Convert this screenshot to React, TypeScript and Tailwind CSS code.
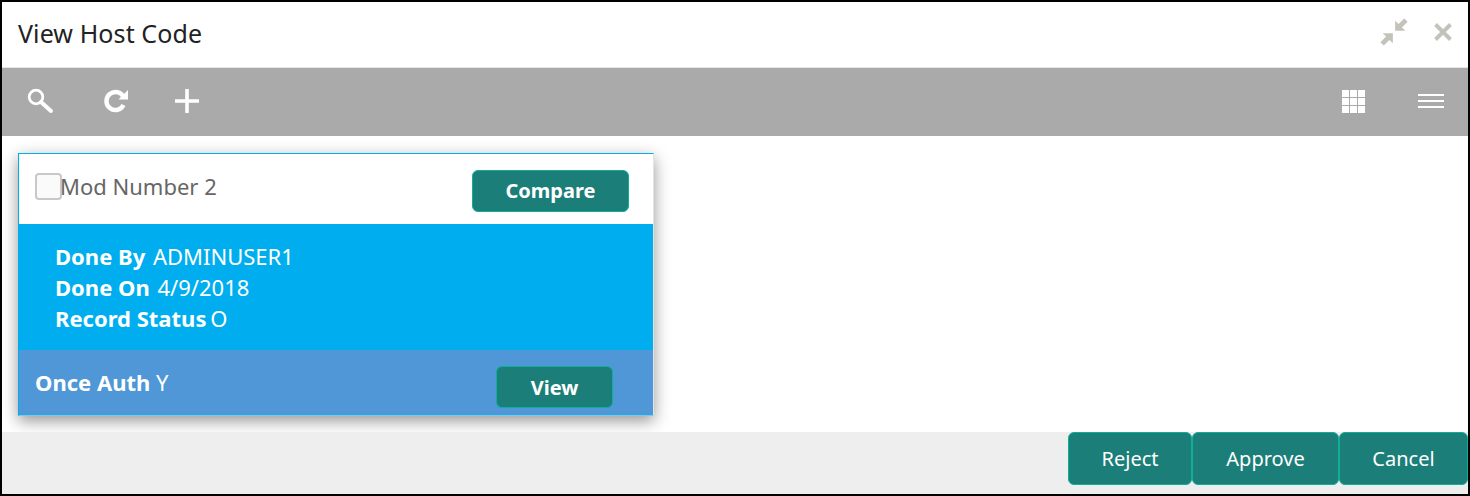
export default function App() {
  const font = { fontFamily: '"Noto Sans", "Open Sans", sans-serif' };
  return (
    <div style={font} className="w-[1470px] h-[496px] border-2 border-black bg-white flex flex-col overflow-hidden">
      <div className="h-[66px] shrink-0 flex items-center pl-[16px] pr-[16px] justify-between border-b border-[#e6e6e6]">
        <span className="text-[25px] text-[#222222] tracking-[0.1px] -mt-[1px]">View Host Code</span>
        <div className="flex items-center gap-[23px] mb-[5px]">
          <svg width="34" height="34" viewBox="0 0 30 30" fill="#c4c3bb">
            <path d="M16 14V5l3 3 5-5 3 3-5 5 3 3z" />
            <path d="M14 16v9l-3-3-5 5-3-3 5-5-3-3z" />
          </svg>
          <svg width="18" height="18" viewBox="0 0 18 18" stroke="#c4c3bb" strokeWidth="4" fill="none">
            <path d="M1.500 1.500l15 15M16.500 1.500l-15 15" />
          </svg>
        </div>
      </div>
      <div className="h-[68px] shrink-0 bg-[#aaaaaa] flex items-center justify-between pl-[24px] pr-[24px]">
        <div className="flex items-center -mt-[3px]">
          <svg width="28" height="28" viewBox="0 0 28 28" fill="none" stroke="#fff" className="mr-[49px]">
            <circle cx="10" cy="10" r="6.8" strokeWidth="2.8" />
            <path d="M15 15l10 9" strokeWidth="4" strokeLinecap="round" />
          </svg>
          <svg width="26" height="26" viewBox="0 0 26 26" className="mr-[45px]">
            <path d="M20.5 17a9 9 0 1 1 0-8" fill="none" stroke="#fff" strokeWidth="4.4" />
            <path d="M15.5 11.5H25V2z" fill="#fff" />
          </svg>
          <svg width="26" height="26" viewBox="0 0 26 26" stroke="#fff" strokeWidth="3.6">
            <path d="M13 1v24M1 13h24" />
          </svg>
        </div>
        <div className="flex items-center gap-[53px] -mt-[2px]">
          <svg width="23" height="23" viewBox="0 0 23 23" fill="#fff">
            <path d="M0 0h7v7H0zM8 0h7v7H8zM16 0h7v7h-7zM0 8h7v7H0zM8 8h7v7H8zM16 8h7v7h-7zM0 16h7v7H0zM8 16h7v7H8zM16 16h7v7h-7z" />
          </svg>
          <div className="flex flex-col gap-[4px] w-[26px]">
            <div className="h-[2px] bg-white" />
            <div className="h-[2px] bg-white" />
            <div className="h-[2px] bg-white" />
          </div>
        </div>
      </div>
      <div className="h-[296px] shrink-0 pl-[16px] pt-[17px] bg-white">
        <div className="w-[636px] h-[263px] border border-[#00aeef] border-b-[#5fd6f5] border-r-[#e4e4e4] shadow-[0_5px_15px_rgba(0,0,0,0.42)] flex flex-col">
          <div className="h-[70px] shrink-0 bg-white flex items-center justify-between pl-[16px] pr-[24px]">
            <div className="flex items-center h-[30px] -mt-[6px]">
              <span className="w-[27px] h-[27px] rounded-[4px] border-2 border-[#c8c8c8] bg-[#fafafa]" />
              <span className="text-[22px] text-[#666666] -ml-[2px] leading-[30px]">Mod Number 2</span>
            </div>
            <button className="w-[157px] h-[42px] rounded-[6px] bg-[#1c7e78] border border-[#0fae9b] text-white font-bold text-[20px] mt-[3px]">
              Compare
            </button>
          </div>
          <div className="h-[126px] shrink-0 bg-[#00aeef] pl-[36px] pt-[17px] text-white text-[22px] leading-[31px]">
            <div><b>Done By</b> <span className="ml-[2px]">ADMINUSER1</span></div>
            <div><b>Done On</b> <span className="ml-[2px]">4/9/2018</span></div>
            <div><b>Record Status</b> <span className="-ml-[2px]">O</span></div>
          </div>
          <div className="flex-1 bg-[#4f97d7] flex items-center justify-between pl-[16px] pr-[40px] text-white text-[22px]">
            <div><b>Once Auth</b> Y</div>
            <button className="w-[117px] h-[42px] rounded-[6px] bg-[#1c7e78] border border-[#0fae9b] text-white font-bold text-[20px] mt-[8px] pt-[3px]">
              View
            </button>
          </div>
        </div>
      </div>
      <div className="flex-1 bg-[#eeeeee] flex justify-end">
        <div className="flex h-[53px]">
          <button className="w-[124px] rounded-[6px] bg-[#1c7e78] border border-[#0fae9b] text-white text-[20px]">Reject</button>
          <button className="w-[147px] rounded-[6px] bg-[#1c7e78] border border-[#0fae9b] text-white text-[20px]">Approve</button>
          <button className="w-[129px] rounded-[6px] bg-[#1c7e78] border border-[#0fae9b] text-white text-[20px]">Cancel</button>
        </div>
      </div>
    </div>
  );
}
